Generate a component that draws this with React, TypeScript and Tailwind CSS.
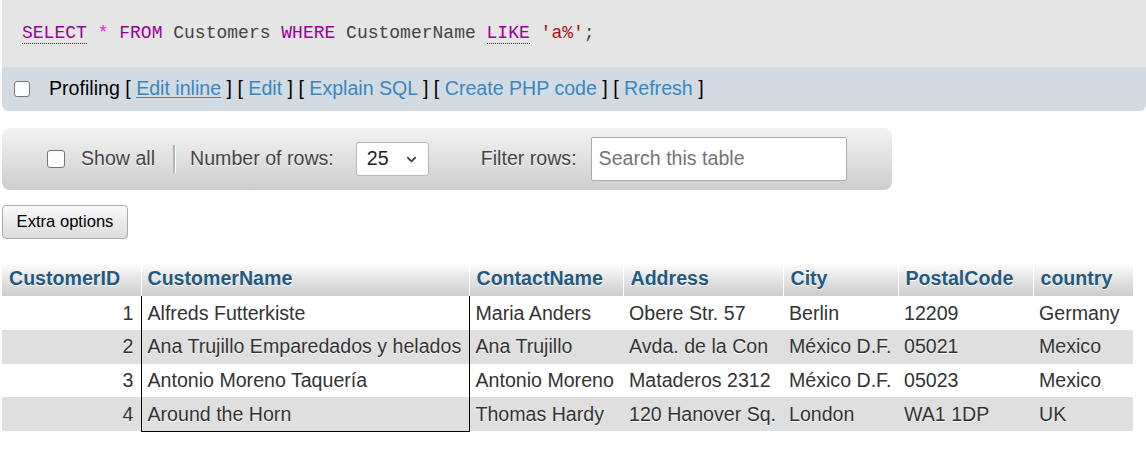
import { ChevronDown } from "lucide-react";

const columns = [
  { label: "CustomerID", width: "w-[139px]" },
  { label: "CustomerName", width: "w-[328px]" },
  { label: "ContactName", width: "w-[154px]" },
  { label: "Address", width: "w-[160px]" },
  { label: "City", width: "w-[115px]" },
  { label: "PostalCode", width: "w-[135px]" },
  { label: "country", width: "w-[100px]" },
];

const rows = [
  ["1", "Alfreds Futterkiste", "Maria Anders", "Obere Str. 57", "Berlin", "12209", "Germany"],
  ["2", "Ana Trujillo Emparedados y helados", "Ana Trujillo", "Avda. de la Con", "México D.F.", "05021", "Mexico"],
  ["3", "Antonio Moreno Taquería", "Antonio Moreno", "Mataderos 2312", "México D.F.", "05023", "Mexico"],
  ["4", "Around the Horn", "Thomas Hardy", "120 Hanover Sq.", "London", "WA1 1DP", "UK"],
];

function Box({ size }: { size: string }) {
  return (
    <span
      className={`${size} block shrink-0 rounded-[3px] border border-[#767676] bg-white`}
    />
  );
}

function Link({ children, underline }: { children: string; underline?: boolean }) {
  return (
    <span className={`text-[#3c86bd] ${underline ? "underline underline-offset-2" : ""}`}>
      {children}
    </span>
  );
}

export default function App() {
  return (
    <div className="pl-[2px] font-['Liberation_Sans',Arial,sans-serif] text-[#333]">
      {/* SQL query */}
      <div className="flex h-[67px] items-center bg-[#e5e5e5] pl-[20px] font-['Liberation_Mono',monospace] text-[18px] text-[#444]">
        <span className="border-b border-dotted border-[#333] leading-[20px] text-[#990099]">SELECT</span>
        <span className="whitespace-pre"> </span>
        <span className="text-[#ee22ee]">*</span>
        <span className="whitespace-pre"> </span>
        <span className="text-[#990099]">FROM</span>
        <span className="whitespace-pre"> Customers </span>
        <span className="text-[#990099]">WHERE</span>
        <span className="whitespace-pre"> CustomerName </span>
        <span className="border-b border-dotted border-[#333] leading-[20px] text-[#990099]">LIKE</span>
        <span className="whitespace-pre"> </span>
        <span className="text-[#aa1111]">'a%'</span>
        <span>;</span>
      </div>

      {/* Profiling bar */}
      <div className="flex h-[44px] items-center rounded-b-md bg-[#d3dbe2] pl-[12px] text-[19.6px] text-black">
        <Box size="h-[16px] w-[16px]" />
        <span className="ml-[19px] whitespace-pre">
          Profiling [ <Link underline>Edit inline</Link> ] [ <Link>Edit</Link> ] [ <Link>Explain SQL</Link> ] [{" "}
          <Link>Create PHP code</Link> ] [ <Link>Refresh</Link> ]
        </span>
      </div>

      {/* Navigation */}
      <div className="mt-[17px] flex h-[62px] w-[890px] items-center rounded-lg bg-gradient-to-b from-[#f3f3f3] to-[#cecece] pl-[45px] text-[19.6px] text-[#444] [text-shadow:0_1px_0_#fff]">
        <Box size="h-[18px] w-[18px]" />
        <span className="ml-[16px]">Show all</span>
        <span className="ml-[18px] h-[28px] w-[2px] bg-[#b5b5b5] shadow-[1px_0_0_#fff]" />
        <span className="ml-[15px]">Number of rows:</span>
        <div className="ml-[22px] flex h-[34px] w-[73px] items-center justify-between rounded-[3px] border border-[#b8b8b8] bg-white pl-[10px] pr-[9px] text-[#222] [text-shadow:none]">
          <span>25</span>
          <ChevronDown size={15} strokeWidth={2.5} className="text-[#333]" />
        </div>
        <span className="ml-[52px]">Filter rows:</span>
        <div className="ml-[14px] flex h-[44px] w-[256px] items-center rounded-[2px] border border-[#aaa] bg-white pl-[7px] text-[#757575] [text-shadow:none]">
          Search this table
        </div>
      </div>

      {/* Extra options */}
      <button className="mt-[15px] flex h-[34px] w-[126px] items-center justify-center rounded-[4px] border border-[#aaa] bg-gradient-to-b from-[#fafafa] to-[#dcdcdc] text-[16.6px] text-black">
        Extra options
      </button>

      {/* Results table */}
      <table className="mt-[23px] w-[1131px] table-fixed border-collapse text-[19.6px]">
        <colgroup>
          {columns.map((c) => (
            <col key={c.label} className={c.width} />
          ))}
        </colgroup>
        <thead>
          <tr className="h-[34px] bg-gradient-to-b from-white to-[#cccccc]">
            {columns.map((c, i) => (
              <th
                key={c.label}
                className={`px-[7px] text-left font-bold text-[#235a81] [text-shadow:0_1px_0_#fff] ${
                  i < columns.length - 1 ? "border-r border-white" : ""
                } ${i === 1 ? "pl-[6px]" : ""}`}
              >
                {c.label}
              </th>
            ))}
          </tr>
        </thead>
        <tbody>
          {rows.map((r, ri) => (
            <tr key={ri} className={`h-[33.75px] ${ri % 2 === 1 ? "bg-[#dfdfdf]" : "bg-white"}`}>
              {r.map((v, ci) => (
                <td
                  key={ci}
                  className={`overflow-hidden whitespace-nowrap px-[6px] pt-[1px] pb-0 text-[#333] [text-shadow:0_1px_0_#fff] ${
                    ci === 0 ? "pr-[7px] text-right" : "text-left"
                  } ${ci === 1 ? "border-x border-black" : ""} ${
                    ci === 1 && ri === rows.length - 1 ? "border-b" : ""
                  }`}
                >
                  {v}
                </td>
              ))}
            </tr>
          ))}
        </tbody>
      </table>
    </div>
  );
}
